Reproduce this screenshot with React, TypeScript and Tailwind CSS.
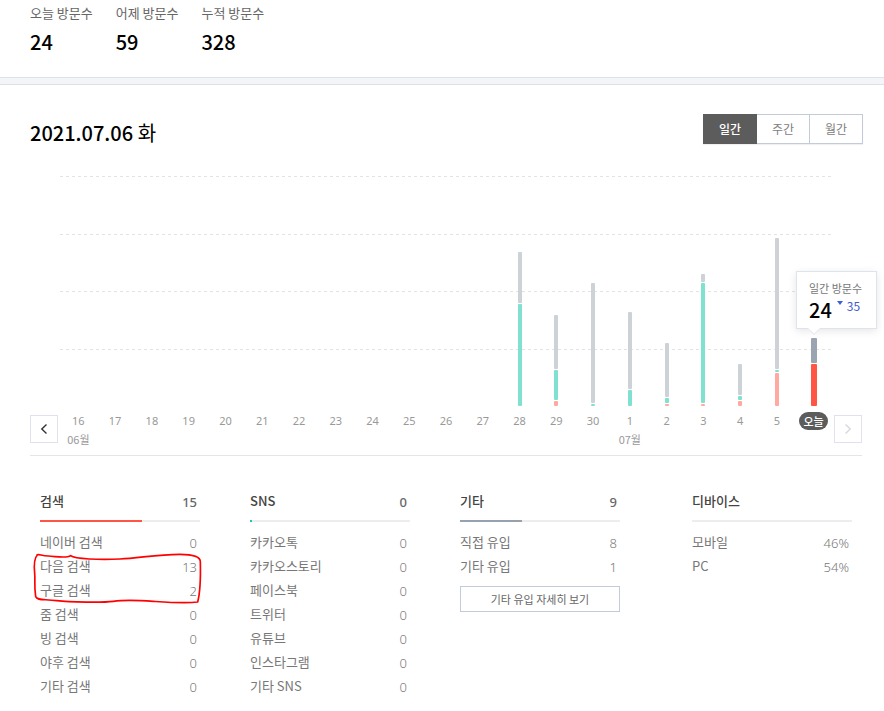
import { useState } from "react";

type Visit = { day: string; month?: string; other?: number; sns?: number; search?: number };

const visits: Visit[] = [
  { day: "16", month: "06월" },
  { day: "17" },
  { day: "18" },
  { day: "19" },
  { day: "20" },
  { day: "21" },
  { day: "22" },
  { day: "23" },
  { day: "24" },
  { day: "25" },
  { day: "26" },
  { day: "27" },
  { day: "28", other: 51, sns: 102 },
  { day: "29", other: 54, sns: 30, search: 5 },
  { day: "30", other: 120, sns: 2 },
  { day: "1", month: "07월", other: 77, sns: 16 },
  { day: "2", other: 54, sns: 5, search: 2 },
  { day: "3", other: 8, sns: 120, search: 2 },
  { day: "4", other: 31, sns: 4, search: 5 },
  { day: "5", other: 131, sns: 2, search: 33 },
  { day: "오늘", other: 25, search: 42 },
];

const totals = [
  { label: "오늘 방문수", value: "24" },
  { label: "어제 방문수", value: "59" },
  { label: "누적 방문수", value: "328" },
];

const periods = ["일간", "주간", "월간"];

type Source = {
  title: string;
  total?: string;
  share: number;
  color: string;
  rows: [string, string][];
};

const search: Source = {
  title: "검색",
  total: "15",
  share: 64,
  color: "bg-[#ff5544]",
  rows: [
    ["네이버 검색", "0"],
    ["다음 검색", "13"],
    ["구글 검색", "2"],
    ["줌 검색", "0"],
    ["빙 검색", "0"],
    ["야후 검색", "0"],
    ["기타 검색", "0"],
  ],
};

const sns: Source = {
  title: "SNS",
  total: "0",
  share: 1,
  color: "bg-[#1fc8ae]",
  rows: [
    ["카카오톡", "0"],
    ["카카오스토리", "0"],
    ["페이스북", "0"],
    ["트위터", "0"],
    ["유튜브", "0"],
    ["인스타그램", "0"],
    ["기타 SNS", "0"],
  ],
};

const etc: Source = {
  title: "기타",
  total: "9",
  share: 39,
  color: "bg-[#97a2af]",
  rows: [
    ["직접 유입", "8"],
    ["기타 유입", "1"],
  ],
};

const device: Source = {
  title: "디바이스",
  share: 0,
  color: "bg-transparent",
  rows: [
    ["모바일", "46%"],
    ["PC", "54%"],
  ],
};

function SourceList({ source, children }: { source: Source; children?: React.ReactNode }) {
  return (
    <section className="relative w-40">
      <div className="flex h-5 items-center justify-between pr-[3px] text-[13px] font-medium text-[#444]">
        <h2>{source.title}</h2>
        <span className="pt-1 font-['Noto_Sans','Noto_Sans_CJK_KR',sans-serif] text-[#666]">{source.total}</span>
      </div>
      <div className="mt-[9px] h-0.5 bg-[#ededed]">
        <div className={"h-full " + source.color} style={{ width: source.share + "%" }} />
      </div>
      <dl className="mt-2">
        {source.rows.map(([name, value]) => (
          <div key={name} className="flex h-6 items-center justify-between pr-[3px] text-[13px] text-[#777]">
            <dt>{name}</dt>
            <dd className="pt-1 font-['Noto_Sans','Noto_Sans_CJK_KR',sans-serif] font-light">{value}</dd>
          </div>
        ))}
      </dl>
      {children}
    </section>
  );
}

function Tooltip() {
  return (
    <div className="absolute top-[95px] left-0 h-[58px] w-[81px] border border-[#dfe3ee] bg-white pt-2 pl-3 shadow-[0_2px_8px_rgba(0,0,0,0.1)]">
      <p className="text-[11px] leading-4 whitespace-nowrap text-[#777]">일간 방문수</p>
      <div className="flex items-start">
        <span className="text-xl leading-7 font-medium text-black">24</span>
        <svg className="mt-[5px] ml-[5px] h-1 w-1.5" viewBox="0 0 6 4" aria-hidden="true">
          <path d="M0 0h6L3 4z" fill="#3b5fdb" />
        </svg>
        <span className="ml-1 text-xs leading-5 text-[#3f5bcf]">35</span>
      </div>
      <svg className="absolute top-[56px] left-[11px] h-[7px] w-3" viewBox="0 0 12 7" aria-hidden="true">
        <path d="M0 0h12v1L6 6.500 0 1z" fill="#fff" />
        <path d="M0 .5 6 6.300 12 .5" fill="none" stroke="#dfe3ee" />
      </svg>
    </div>
  );
}

export default function App() {
  const [period, setPeriod] = useState("일간");

  return (
    <main className="min-h-screen bg-white pb-3 font-['Noto_Sans_CJK_KR',sans-serif] text-[#666]">
      <header className="flex h-[77px] gap-[23px] pt-1 pl-[30px]">
        {totals.map((t) => (
          <div key={t.label}>
            <p className="text-[13px] leading-[18px]">{t.label}</p>
            <p className="mt-1 text-xl leading-8 font-medium text-black">{t.value}</p>
          </div>
        ))}
      </header>
      <div className="h-2 border-y border-[#dde1ea] bg-[#f3f5f9]" />

      <div className="pr-[22px] pl-[30px]">
        <div className="flex items-start justify-between pt-[29px]">
          <h1 className="pt-1 text-xl leading-[30px] font-medium text-black">
            2021.07.06 <span className="font-normal">화</span>
          </h1>
          <div className="-mr-px flex h-[30px] w-40 shadow-[0_1px_1px_rgba(0,0,0,0.06)]">
            {periods.map((p) => (
              <button
                key={p}
                type="button"
                onClick={() => setPeriod(p)}
                className={
                  p === period
                    ? "w-[54px] bg-[#5c5c5c] text-xs font-medium text-white"
                    : "w-[53px] border-y border-r border-[#c3cad8] text-xs text-[#808080]"
                }
              >
                {p}
              </button>
            ))}
          </div>
        </div>

        <div className="mx-[30px] mt-7 grid h-[230px]">
          <div className="grid grid-rows-4 [grid-area:1/1]">
            {[0, 1, 2, 3].map((i) => (
              <div
                key={i}
                className="h-px bg-[repeating-linear-gradient(90deg,#e3e3e3_0_3px,transparent_3px_6px)]"
              />
            ))}
          </div>
          <div className="grid grid-cols-21 [grid-area:1/1]">
            {visits.map((v) => {
              const today = v.day === "오늘";
              const width = today ? "w-1.5 " : "w-1 ";
              return (
                <div key={v.day} className="flex flex-col items-center justify-end gap-px">
                  {v.other && (
                    <div className={width + "rounded-[1px] " + (today ? "bg-[#9ba5b1]" : "bg-[#cdd2d7]")} style={{ height: v.other }} />
                  )}
                  {v.sns && <div className={width + "rounded-[1px] bg-[#80e1d1]"} style={{ height: v.sns }} />}
                  {v.search && (
                    <div className={width + "rounded-[1px] " + (today ? "bg-[#ff5544]" : "bg-[#ffa9a1]")} style={{ height: v.search }} />
                  )}
                </div>
              );
            })}
          </div>
          <div className="relative ml-auto w-[36px] [grid-area:1/1]">
            <Tooltip />
          </div>
        </div>

        <div className="flex h-[50px] gap-0.5 border-b border-[#e5e5e5] pt-[9px]">
          <button type="button" aria-label="이전" className="flex size-7 items-center justify-center border border-[#dfe1ee]">
            <svg className="h-3 w-2" viewBox="0 0 8 12" fill="none" stroke="#333" strokeWidth="1.400" aria-hidden="true">
              <path d="M6.500 1.500 1.800 6l4.700 4.500" />
            </svg>
          </button>
          <ol className="-mt-[3px] grid flex-1 grid-cols-21 text-center text-[11px] leading-[18px] text-[#999]">
            {visits.map((v) => (
              <li key={v.day} className="flex flex-col items-center whitespace-nowrap">
                {v.day === "오늘" ? (
                  <span className="w-[29px] rounded-full bg-[#5c5c5c] font-medium text-white">{v.day}</span>
                ) : (
                  <span className="font-['Noto_Sans',sans-serif]">{v.day}</span>
                )}
                {v.month && <span>{v.month}</span>}
              </li>
            ))}
          </ol>
          <button type="button" aria-label="다음" className="flex size-7 items-center justify-center border border-[#dfe1ee]">
            <svg className="h-3 w-2" viewBox="0 0 8 12" fill="none" stroke="#d5d8dd" strokeWidth="1.400" aria-hidden="true">
              <path d="M1.500 1.500 6.200 6l-4.700 4.500" />
            </svg>
          </button>
        </div>

        <div className="flex gap-[50px] px-2.5 pt-[35px]">
          <SourceList source={search}>
            <svg className="pointer-events-none absolute top-[61px] -left-2 h-[54px] w-[174px]" viewBox="36 216 522 162" fill="none" stroke="#f00" strokeWidth="5" strokeLinejoin="round" aria-hidden="true">
              <path d="M50 226C54 220 62 227 85 228S138 236 152 227C164 237 240 240 300 237S410 223 480 223C515 223 541 228 541 245C542 285 541 335 533 366C495 371 430 366 400 364S310 360 280 364S150 367 110 362S52 362 47 350C42 315 46 300 44 280S42 235 52 225" />
            </svg>
          </SourceList>
          <SourceList source={sns} />
          <SourceList source={etc}>
            <button type="button" className="mt-2 h-[26px] w-full border border-[#c3cad8] text-[11px] text-[#666]">
              기타 유입 자세히 보기
            </button>
          </SourceList>
          <div className="ml-auto">
            <SourceList source={device} />
          </div>
        </div>
      </div>
    </main>
  );
}
